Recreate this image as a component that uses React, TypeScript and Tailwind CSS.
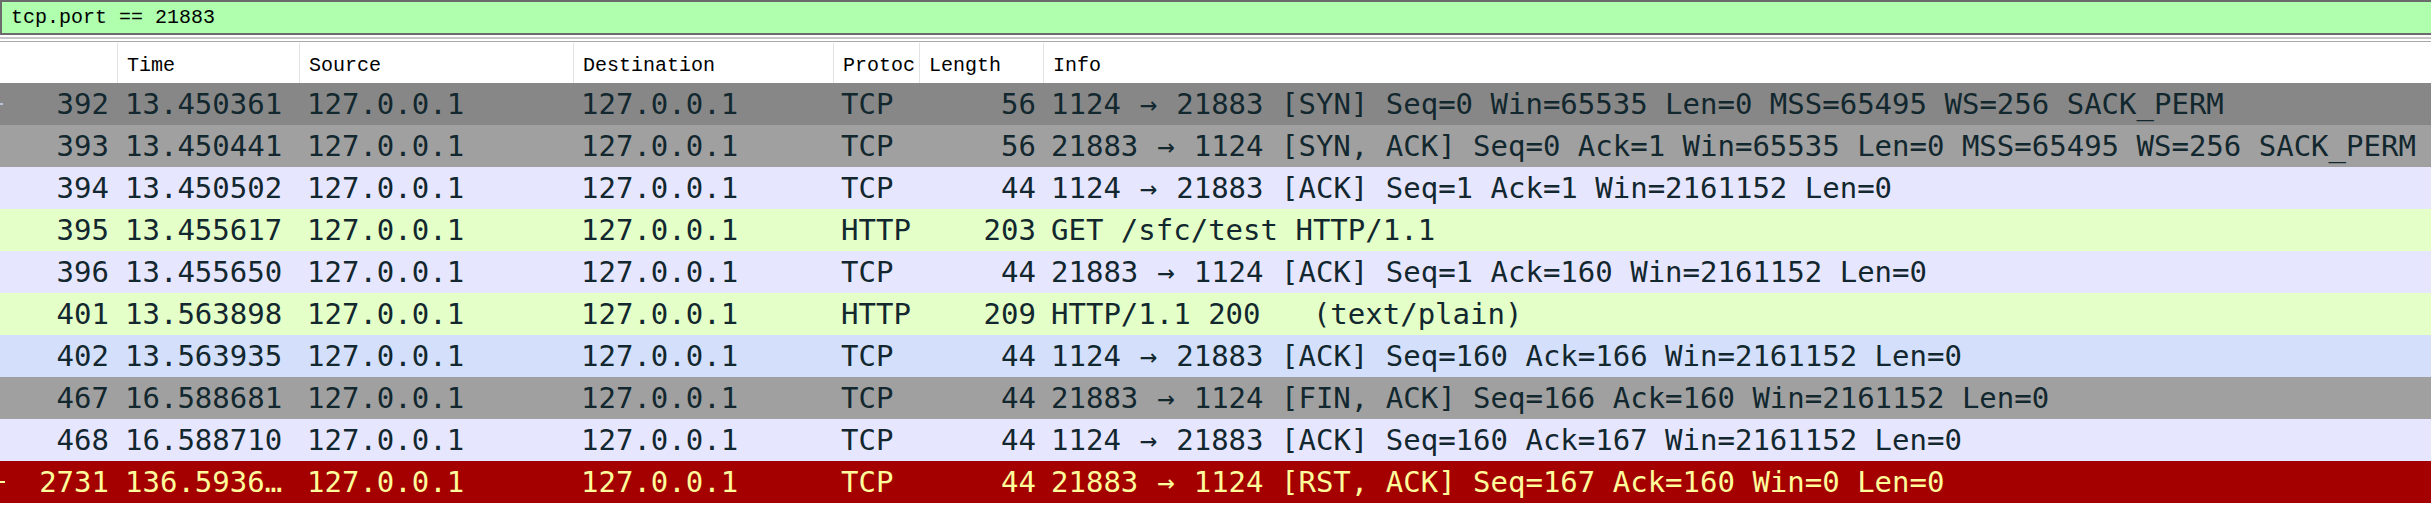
import React from "react";

type Row = {
  no: string;
  time: string;
  src: string;
  dst: string;
  proto: string;
  len: string;
  info: string;
  bg: string;
  fg: string;
  mark?: "top" | "dash";
};

const rows: Row[] = [
  { no: "392", time: "13.450361", src: "127.0.0.1", dst: "127.0.0.1", proto: "TCP", len: "56", info: "1124 → 21883 [SYN] Seq=0 Win=65535 Len=0 MSS=65495 WS=256 SACK_PERM", bg: "bg-[#878787]", fg: "text-[#12272e]", mark: "top" },
  { no: "393", time: "13.450441", src: "127.0.0.1", dst: "127.0.0.1", proto: "TCP", len: "56", info: "21883 → 1124 [SYN, ACK] Seq=0 Ack=1 Win=65535 Len=0 MSS=65495 WS=256 SACK_PERM", bg: "bg-[#a0a0a0]", fg: "text-[#12272e]" },
  { no: "394", time: "13.450502", src: "127.0.0.1", dst: "127.0.0.1", proto: "TCP", len: "44", info: "1124 → 21883 [ACK] Seq=1 Ack=1 Win=2161152 Len=0", bg: "bg-[#e7e6ff]", fg: "text-[#12272e]" },
  { no: "395", time: "13.455617", src: "127.0.0.1", dst: "127.0.0.1", proto: "HTTP", len: "203", info: "GET /sfc/test HTTP/1.1", bg: "bg-[#e4ffc7]", fg: "text-[#12272e]" },
  { no: "396", time: "13.455650", src: "127.0.0.1", dst: "127.0.0.1", proto: "TCP", len: "44", info: "21883 → 1124 [ACK] Seq=1 Ack=160 Win=2161152 Len=0", bg: "bg-[#e7e6ff]", fg: "text-[#12272e]" },
  { no: "401", time: "13.563898", src: "127.0.0.1", dst: "127.0.0.1", proto: "HTTP", len: "209", info: "HTTP/1.1 200   (text/plain)", bg: "bg-[#e4ffc7]", fg: "text-[#12272e]" },
  { no: "402", time: "13.563935", src: "127.0.0.1", dst: "127.0.0.1", proto: "TCP", len: "44", info: "1124 → 21883 [ACK] Seq=160 Ack=166 Win=2161152 Len=0", bg: "bg-[#d3dffb]", fg: "text-[#12272e]" },
  { no: "467", time: "16.588681", src: "127.0.0.1", dst: "127.0.0.1", proto: "TCP", len: "44", info: "21883 → 1124 [FIN, ACK] Seq=166 Ack=160 Win=2161152 Len=0", bg: "bg-[#a0a0a0]", fg: "text-[#12272e]" },
  { no: "468", time: "16.588710", src: "127.0.0.1", dst: "127.0.0.1", proto: "TCP", len: "44", info: "1124 → 21883 [ACK] Seq=160 Ack=167 Win=2161152 Len=0", bg: "bg-[#e7e6ff]", fg: "text-[#12272e]" },
  { no: "2731", time: "136.5936…", src: "127.0.0.1", dst: "127.0.0.1", proto: "TCP", len: "44", info: "21883 → 1124 [RST, ACK] Seq=167 Ack=160 Win=0 Len=0", bg: "bg-[#a40000]", fg: "text-[#fffc9c]", mark: "dash" },
];

const grid = "grid grid-cols-[117px_182px_274px_260px_86px_124px_1fr]";
const mono = "font-['DejaVu_Sans_Mono','Liberation_Mono',monospace]";
const headFont = "font-['Liberation_Mono','DejaVu_Sans_Mono',monospace]";

function Info({ text }: { text: string }) {
  const parts = text.split("→");
  if (parts.length === 1) return <>{text}</>;
  return (
    <>
      {parts[0]}
      <span className="mx-[1.5px]">→</span>
      {parts[1]}
    </>
  );
}

export default function App() {
  const headers = ["", "Time", "Source", "Destination", "Protoc", "Length", "Info"];
  return (
    <div className="w-[2431px] h-[511px] bg-white overflow-hidden">
      {/* display filter */}
      <div className="h-[35px] bg-[#afffaf] border-2 border-r-0 border-[#6b6b6b] flex items-center pl-[9px]">
        <span className={`${headFont} text-[20px] text-black leading-none pt-[1px]`}>tcp.port == 21883</span>
      </div>
      {/* splitter */}
      <div className="h-[8px] flex flex-col">
        <div className="h-[2px] bg-white" />
        <div className="h-[2px] bg-[#c6c6c6]" />
        <div className="h-[2px] bg-white" />
        <div className="h-[1px] bg-[#a8a8a8]" />
        <div className="h-[1px] bg-white" />
      </div>
      {/* header */}
      <div className={`${grid} h-[40px] bg-white`}>
        {headers.map((h, i) => (
          <div
            key={i}
            className={`flex items-center pl-[9px] pt-[5px] ${i > 0 ? "border-l border-[#e2e2e2]" : ""} ${headFont} text-[20px] text-black whitespace-nowrap overflow-hidden`}
          >
            {h}
          </div>
        ))}
      </div>
      {/* rows */}
      <div className="flex flex-col">
        {rows.map((r) => (
          <div key={r.no} className={`${grid} h-[42px] ${r.bg} ${r.fg} ${mono} text-[29px] leading-none`}>
            <div className="relative flex items-center justify-end pr-[8px]">
              {r.mark === "top" && <span className="absolute left-0 top-[20px] w-[3px] h-[2px] bg-[#b8c4d4]" />}
              {r.mark === "dash" && <span className="absolute left-0 top-[20px] w-[5px] h-[2px] bg-[#fffc9c]" />}
              {r.no}
            </div>
            <div className="flex items-center pl-[8px] whitespace-nowrap overflow-hidden">{r.time}</div>
            <div className="flex items-center pl-[8px] whitespace-nowrap">{r.src}</div>
            <div className="flex items-center pl-[8px] whitespace-nowrap">{r.dst}</div>
            <div className="flex items-center pl-[8px] whitespace-nowrap">{r.proto}</div>
            <div className="flex items-center justify-end pr-[7px] whitespace-nowrap">{r.len}</div>
            <div className="flex items-center pl-[8px] whitespace-pre overflow-hidden">
              <Info text={r.info} />
            </div>
          </div>
        ))}
      </div>
    </div>
  );
}
